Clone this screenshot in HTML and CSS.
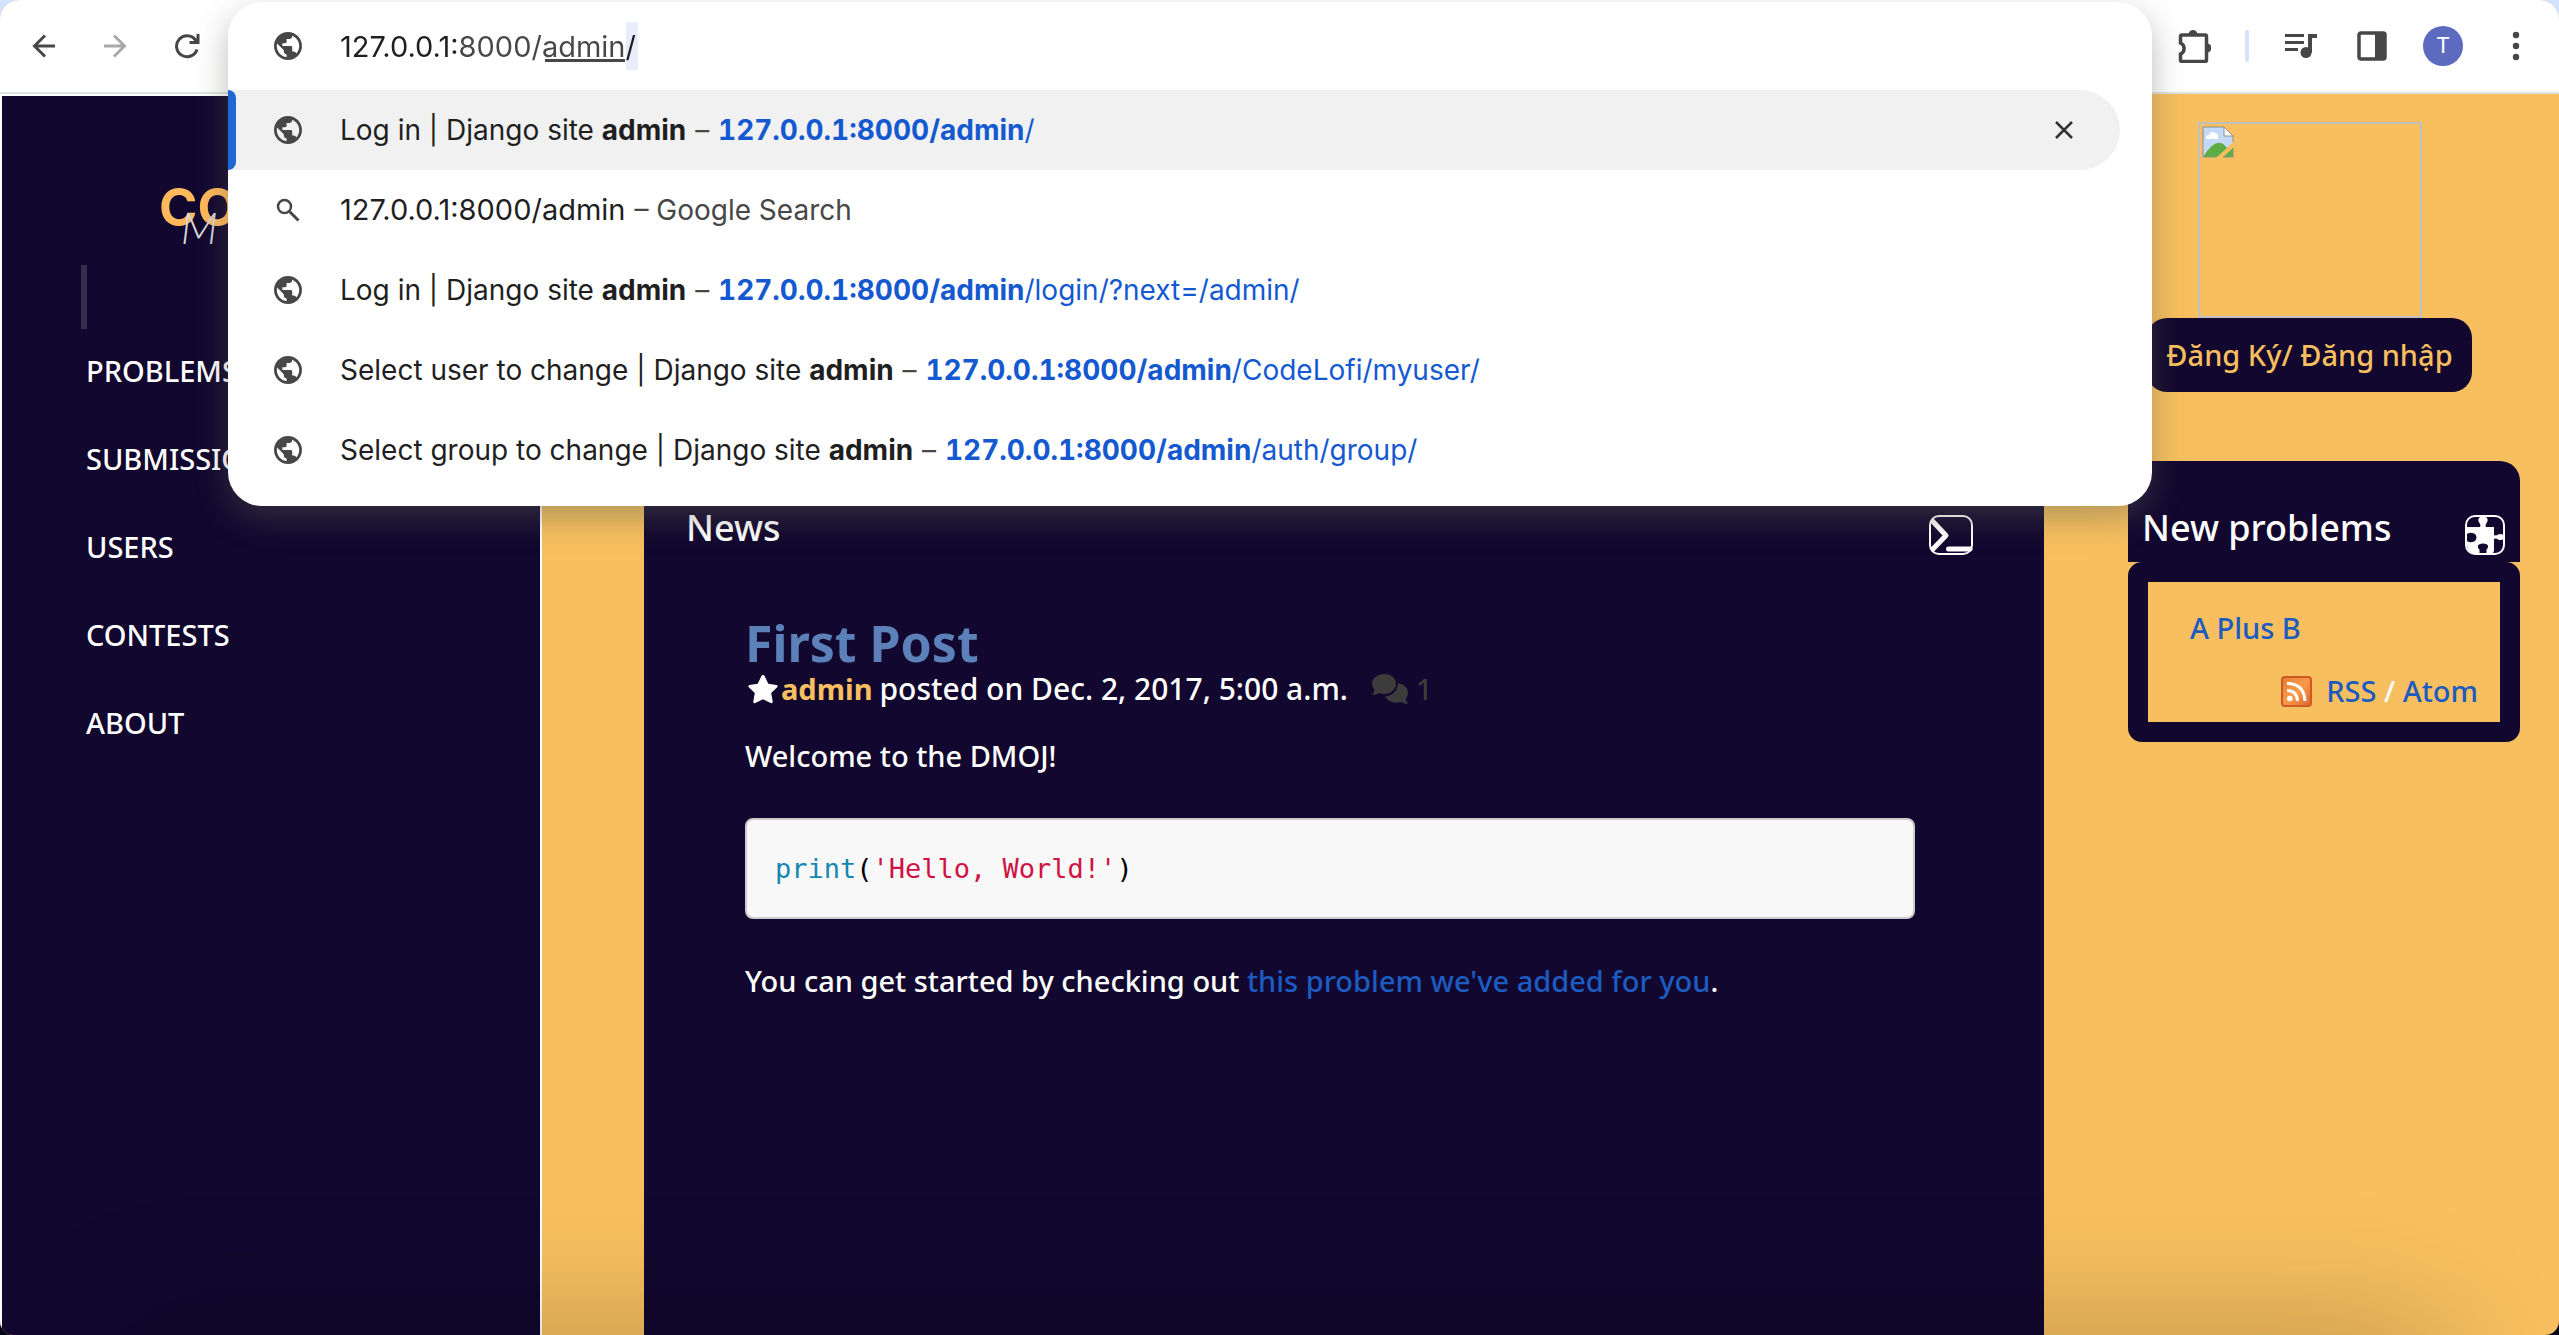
FILE: index.html
```html
<!DOCTYPE html>
<html lang="vi">
<head>
<meta charset="utf-8">
<title>CodeLofi</title>
<link rel="stylesheet" href="styles.css">
</head>
<body>
<svg class="defs" aria-hidden="true">
  <symbol id="globe" viewBox="2 2 20 20"><path d="M12 2C6.480 2 2 6.480 2 12s4.480 10 10 10 10-4.480 10-10S17.520 2 12 2zm-1 17.930c-3.950-.49-7-3.850-7-7.930 0-.62.080-1.210.21-1.790L9 15v1c0 1.100.9 2 2 2v1.930zm6.900-2.540c-.26-.81-1-1.390-1.900-1.390h-1v-3c0-.55-.45-1-1-1H8v-2h2c.55 0 1-.45 1-1V7h2c1.100 0 2-.9 2-2v-.41c2.930 1.190 5 4.060 5 7.410 0 2.080-.8 3.970-2.100 5.390z"/></symbol>
</svg>
<div class="window">
  <header class="toolbar">
    <div class="tools">
      <button class="tool" aria-label="Back"><svg width="24" height="24" viewBox="0 0 24 24"><path d="M23 12H3M13 1.500 2.500 12 13 22.500" fill="none" stroke="#474747" stroke-width="3"/></svg></button>
      <button class="tool" aria-label="Forward"><svg width="24" height="24" viewBox="0 0 24 24"><path d="M1 12h20M11 1.500 21.500 12 11 22.500" fill="none" stroke="#a9a9a9" stroke-width="3"/></svg></button>
      <button class="tool" aria-label="Reload"><svg width="26" height="26" viewBox="0 0 26 26"><path d="M23 16.500A10.500 10.500 0 1 1 21.500 7L23 9" fill="none" stroke="#474747" stroke-width="3"/><path d="M25.500 1v10h-10V8h7V1z" fill="#474747"/></svg></button>
    </div>
    <div class="tools tools-right">
      <button class="tool" aria-label="Extensions"><svg width="34" height="34" viewBox="0 0 34 34"><path d="M5 6h23q1.500 0 1.500 1.500V31q0 1.500-1.500 1.500H5q-1.500 0-1.500-1.500v-6a6 6 0 0 0 0-11V7.500Q3.500 6 5 6z" fill="none" stroke="#474747" stroke-width="3.500"/><path d="M11.500 5.500a4.500 4.500 0 0 1 9 0zM30 14.500a4.500 4.500 0 0 1 0 9z" fill="#474747"/></svg></button>
      <span class="divider"></span>
      <button class="tool" aria-label="Media controls"><svg width="32" height="26" viewBox="0 0 32 26" fill="#474747"><path d="M0 1h19v3H0zM0 8h19v3H0zM0 15h13v3H0zM23 1h9v4h-5v15h-4z"/><circle cx="21" cy="19.500" r="5.500"/></svg></button>
      <button class="tool" aria-label="Side panel"><svg width="30" height="30" viewBox="0 0 30 30"><rect x="2" y="2" width="26" height="26" rx="2" fill="none" stroke="#474747" stroke-width="3.500"/><path d="M18 2h10v26H18z" fill="#474747"/></svg></button>
      <button class="avatar" aria-label="Profile">T</button>
      <button class="tool" aria-label="Menu"><svg width="8" height="30" viewBox="0 0 8 30" fill="#474747"><circle cx="4" cy="4" r="3.200"/><circle cx="4" cy="15" r="3.200"/><circle cx="4" cy="26" r="3.200"/></svg></button>
    </div>
  </header>

  <div class="page">
    <aside class="sidebar">
      <a class="logo" href="#"><span class="logo-name">CODE</span><span class="logo-script">M</span></a>
      <div class="marker"></div>
      <nav class="nav">
        <a href="#">PROBLEMS</a>
        <a href="#">SUBMISSIONS</a>
        <a href="#">USERS</a>
        <a href="#">CONTESTS</a>
        <a href="#">ABOUT</a>
      </nav>
    </aside>

    <main class="main">
      <div class="panel-head">
        <h2>News</h2>
        <svg width="44" height="40" viewBox="0 0 44 40" fill="none" stroke="#fff"><rect x="1" y="1" width="42" height="38" rx="9" stroke-width="2"/><path d="M3 5.500 17 20.500 3 35" stroke-width="5" stroke-linejoin="round"/><path d="M19.500 34H41" stroke-width="5" stroke-linecap="round"/></svg>
      </div>
      <article class="post">
        <h3><a href="#">First Post</a></h3>
        <div class="byline">
          <svg class="star" width="30" height="29" viewBox="0 0 30 29"><path d="M15 0q1.200 0 1.700 1.200l3.600 7.500 8.200 1.300q2 .5.700 2.200l-6 5.900 1.500 8.400q0 2.400-2 1.500L15 24.200 7.300 28q-2 .9-2-1.500l1.500-8.400-6-5.900Q-.5 10.500 1.500 10l8.200-1.300 3.600-7.500Q13.800 0 15 0z" fill="#fff"/></svg>
          <a class="author" href="#">admin</a>
          <span class="posted">posted on Dec. 2, 2017, 5:00 a.m.</span>
          <a class="comments" href="#"><svg width="36" height="30" viewBox="0 0 36 30" fill="currentColor"><path d="M12 0c6.500 0 12 4.300 12 10s-5.500 10-12 10q-3 0-5.500-1Q4 21 .8 21q-1-.5 0-1.500 1.600-1.700 1.700-3.500Q0 13.500 0 10 0 4.300 12 0z"/><path d="M12 0C5.500 0 0 4.300 0 10h24C24 4.300 18.500 0 12 0z"/><path d="M25.800 9.300C32 10 36 13.900 36 19q0 3.300-2.300 6 .1 1.700 1.500 3.300 1 1.300-.2 1.700-3 0-5.500-2-2.500.8-5 .8-8 0-11.500-6.500c7.500-.8 13-5.800 12.800-13z"/></svg>1</a>
        </div>
        <p class="intro">Welcome to the DMOJ!</p>
        <pre class="code"><code><span class="fn">print</span>(<span class="str">'Hello, World!'</span>)</code></pre>
        <p class="outro">You can get started by checking out <a href="#">this problem we've added for you</a>.</p>
      </article>
    </main>

    <aside class="rail">
      <div class="account">
        <div class="picture" role="img" aria-label="Profile picture"><svg width="32" height="32" viewBox="0 0 32 32"><path d="M1 1h21l9 9v6L15 31H1z" fill="#c3d9f7"/><path d="M22 1v9h9z" fill="#fff"/><path d="M1 31Q15 8 25 22L15 31z" fill="#5cad43"/><path d="m21 31 10-9v9z" fill="#5cad43"/><path d="M4 13q-1-4 3-4 2-5 6-2 4 0 3 6z" fill="#fff"/><path d="M31 16v-6l-9-9H1v30h13M22 1v9h9M21 31h10v-9" fill="none" stroke="#8e8e8e" stroke-width="1"/></svg></div>
        <button class="login">Đăng Ký/ Đăng nhập</button>
      </div>
      <section>
        <div class="rail-head">
          <h2>New problems</h2>
          <svg width="40" height="40" viewBox="0 0 40 40"><path d="M2 12h13q1-2-.5-4a4.500 4.500 0 1 1 7 0Q20 10 21 12h8v8q2 1 4-.5 5-2 6 2.500-1 4.500-6 2.500-2-1.500-4-.5v11q0 4-4 4H11q-9-1-9-10v-3q3 2 5 1a4 4 0 0 0 0-9q-2-1-5 1z" fill="#fff"/><path d="M18 28.500c6 0 6 4 3.500 6V38h-7v-3.500c-2.500-2-2.500-6 3.500-6z" fill="#12072e"/><rect x="1" y="1" width="38" height="38" rx="9" fill="none" stroke="#fff" stroke-width="2"/></svg>
        </div>
        <div class="rail-box">
          <a href="#">A Plus B</a>
          <div class="feeds">
            <svg width="31" height="31" viewBox="0 0 31 31"><defs><linearGradient id="feed" x1="0" y1="0" x2="1" y2="1"><stop offset="0" stop-color="#e87a35"/><stop offset=".5" stop-color="#f99b4a"/><stop offset="1" stop-color="#dc6430"/></linearGradient></defs><rect x="1" y="1" width="29" height="29" rx="3" fill="url(#feed)" stroke="#cc5a22" stroke-width="2"/><circle cx="8.800" cy="22.500" r="2.800" fill="#fff"/><path d="M6 14.500q10 0 10.500 10.500M6 7.500q17 0 18 17.500" fill="none" stroke="#fff" stroke-width="3"/></svg>
            <span><a href="#">RSS</a> / <a href="#">Atom</a></span>
          </div>
        </div>
      </section>
    </aside>
  </div>

  <div class="omnibox">
    <label class="address">
      <svg class="icon"><use href="#globe"/></svg>
      <input type="text" aria-label="Address" value="127.0.0.1:8000/admin/">
    </label>
    <ul class="results">
      <li class="selected"><svg class="icon"><use href="#globe"/></svg><span class="text">Log in | Django site <b>admin</b> <i>–</i> <a href="#"><b>127.0.0.1:8000/admin</b>/</a></span>
        <button class="remove" aria-label="Remove"><svg width="18" height="18" viewBox="0 0 18 18"><path d="m1 1 16 16M17 1 1 17" stroke="#333" stroke-width="2.500"/></svg></button></li>
      <li><svg class="icon" viewBox="-2 -2 28 28"><circle cx="8.500" cy="8.500" r="6.500" fill="none" stroke="#474747" stroke-width="2.500"/><path d="m13.500 13.500 9 9" stroke="#474747" stroke-width="3"/></svg><span class="text"><span class="query">127.0.0.1:8000/admin</span> <i>– Google Search</i></span></li>
      <li><svg class="icon"><use href="#globe"/></svg><span class="text">Log in | Django site <b>admin</b> <i>–</i> <a href="#"><b>127.0.0.1:8000/admin</b>/login/?next=/admin/</a></span></li>
      <li><svg class="icon"><use href="#globe"/></svg><span class="text">Select user to change | Django site <b>admin</b> <i>–</i> <a href="#"><b>127.0.0.1:8000/admin</b>/CodeLofi/myuser/</a></span></li>
      <li><svg class="icon"><use href="#globe"/></svg><span class="text">Select group to change | Django site <b>admin</b> <i>–</i> <a href="#"><b>127.0.0.1:8000/admin</b>/auth/group/</a></span></li>
    </ul>
  </div>
  <div class="dock-shade"></div>
</div>
</body>
</html>
```
FILE: styles.css
```css
:root {
  --navy: #12072e;
  --sand: #f7bf5f;
  --link: #1c5bc0;
  --grey: #474747;
}

* { box-sizing: border-box; }

body {
  margin: 0;
  background: linear-gradient(#d3e3fd 50%, #05051a 50%);
  font: 500 29px/38px "Noto Sans", sans-serif;
  color: #fff;
}

h2, h3, p, pre, ul { margin: 0; padding: 0; font-weight: inherit; }
a { color: var(--link); text-decoration: none; }
button { border: 0; padding: 0; background: none; font: inherit; }
svg { display: block; flex: none; }
.defs { position: absolute; width: 0; height: 0; }

.window {
  position: relative;
  display: flex;
  flex-direction: column;
  min-height: 100vh;
  overflow: hidden;
  border-radius: 20px 20px 14px 14px;
  background: var(--sand);
}

/* Browser toolbar */
.toolbar {
  display: flex;
  justify-content: space-between;
  align-items: center;
  height: 94px;
  padding: 0 39px 0 32px;
  border-bottom: 2px solid #dfe3e1;
  background: #fff;
}
.tools { display: flex; align-items: center; gap: 47px; }
.tools-right { gap: 36px; }
.tools-right .tool:nth-of-type(3) { margin-left: 4px; }
.divider { width: 4px; height: 32px; margin-left: -2px; border-radius: 2px; background: #d3e3fd; }
.avatar {
  width: 40px;
  height: 40px;
  border-radius: 50%;
  background: #5c6bc0;
  color: #fff;
  font: 22px/40px Roboto, sans-serif;
}
.tools-right .tool:last-child { margin-left: 13px; }

/* Page */
.page {
  flex: 1;
  display: grid;
  grid-template-columns: 542px minmax(0, 1fr) 392px;
  padding-right: 39px;
}

.sidebar {
  padding: 93px 0 0 81px;
  border: 2px solid #fff;
  border-bottom: 0;
  background: var(--navy);
}
.logo { display: flex; height: 54px; padding-left: 76px; }
.logo-name { color: #ffb95a; font: 700 52px/38px Inter, sans-serif; }
.logo-script {
  margin: 16px 0 0 -126px;
  color: #d8d8d8;
  font: italic 300 44px/44px Lato, sans-serif;
}
.marker { width: 6px; height: 64px; margin: 22px 0 23px -2px; background: #382c4e; }
.nav { display: flex; flex-direction: column; gap: 50px; padding-left: 3px; }
.nav a { color: #fff; }

.main { margin: 0 84px 0 102px; background: var(--navy); }
.panel-head {
  display: flex;
  justify-content: space-between;
  align-items: center;
  padding: 407px 71px 0 42px;
}
h2 { font-size: 36px; line-height: 48px; }
.panel-head svg, .rail-head svg { margin-top: 14px; }
.post { padding: 61px 129px 0 101px; }
h3 { font-size: 50px; line-height: 54px; font-weight: 700; }
h3 a { color: #5c81b8; }
.byline { display: flex; align-items: center; }
.star { margin: 0 3px; }
.author { color: var(--sand); font-weight: 700; }
.posted { margin: 0 24px 0 7px; font-size: 30px; }
.comments { display: flex; align-items: center; gap: 8px; color: #3c3c3c; }
.intro { margin: 29px 0 43px; }
.code {
  padding: 30px 28px 29px;
  border: 2px solid #ccc;
  border-radius: 8px;
  background: #f8f8f8;
  color: #000;
  font: 27px/38px "DejaVu Sans Mono", monospace;
}
.code code { font: inherit; }
.fn { color: #1487b0; }
.str { color: #d01244; }
.outro { margin-top: 43px; }

.account {
  display: flex;
  flex-direction: column;
  align-items: center;
  margin: 28px 29px 69px 0;
}
.picture { width: 224px; height: 196px; padding: 2px; border: 2px solid #c0c0c0; }
.login {
  height: 74px;
  padding: 0 19px;
  border-radius: 20px;
  background: var(--navy);
  color: var(--sand);
}
.rail-head {
  display: flex;
  justify-content: space-between;
  align-items: center;
  padding: 40px 15px 7px 14px;
  border-radius: 20px 20px 0 0;
  background: var(--navy);
}
.rail-box {
  padding: 27px 22px 12px 42px;
  border: 20px solid var(--navy);
  border-radius: 14px;
}
.feeds { display: flex; justify-content: flex-end; align-items: center; gap: 14px; margin-top: 25px; }

/* Address bar with its suggestions */
.omnibox {
  position: absolute;
  top: 2px;
  left: 228px;
  right: 407px;
  padding-bottom: 16px;
  border-radius: 34px;
  background: #fff;
  box-shadow: 0 12px 32px rgba(90, 95, 85, .42);
  color: #1f1f1f;
  font: 400 28px/38px Inter, sans-serif;
}
.icon { width: 28px; height: 28px; margin: 0 38px 0 46px; fill: var(--grey); }
.address { display: flex; align-items: center; height: 88px; }
.address input {
  flex: 1;
  height: 48px;
  margin-right: 60px;
  padding: 0;
  border: 0;
  outline: 0;
  background:
    linear-gradient(90deg, #1f1f1f 117px, var(--grey) 117px 286px, #1f1f1f 286px) text,
    linear-gradient(var(--grey), var(--grey)) 205px 37px / 80px 3px no-repeat border-box,
    linear-gradient(#e9edf9, #e9edf9) 286px 0 / 12px 48px no-repeat border-box;
  color: transparent;
  font: inherit;
  font-size: 29px;
}
.results { list-style: none; }
.results li { display: flex; align-items: center; height: 80px; margin-right: 32px; }
.text { flex: 1; white-space: nowrap; }
.text b { font-weight: 700; font-variant-numeric: tabular-nums; }
.text i { margin: 0 1px; color: var(--grey); font-style: normal; }
.text a { color: #1559d0; }
.query { font-size: 29px; }
.results .selected {
  border-radius: 0 40px 40px 0;
  background: linear-gradient(#f1f1f1, #f1f1f1) 4px 0 no-repeat;
}
.selected::before {
  content: "";
  width: 8px;
  height: 80px;
  margin-right: -8px;
  border-radius: 0 8px 8px 0;
  background: #1f67d2;
}
.remove { margin-right: 47px; }

.dock-shade {
  position: absolute;
  top: 100%;
  left: 120px;
  right: 120px;
  height: 140px;
  box-shadow: 0 0 140px rgba(0, 0, 0, .24);
}
```
